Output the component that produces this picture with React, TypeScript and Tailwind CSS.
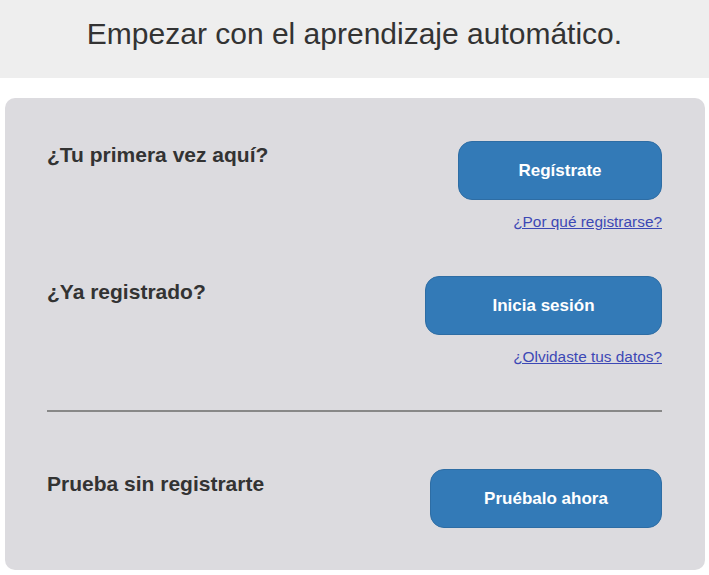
import React from "react";

const font = { fontFamily: '"Liberation Sans", Arial, sans-serif' };

function Btn({ w, children }: { w: string; children: React.ReactNode }) {
  return (
    <button
      className={`${w} h-[59px] rounded-[14px] border border-[#2e6da4] bg-[#337ab7] text-[17px] font-bold text-white`}
    >
      {children}
    </button>
  );
}

export default function App() {
  return (
    <div className="w-[709px] h-[575px] bg-white text-[#333333]" style={font}>
      <div className="h-[78px] bg-[#eeeeee] flex items-center justify-center">
        <h1 className="text-[30px] leading-[34px] text-[#333333] -mt-[11px]">
          Empezar con el aprendizaje automático.
        </h1>
      </div>
      <div className="mt-[20px] ml-[5px] mr-[4px] h-[472px] rounded-[10px] bg-[#dcdbdf] pl-[42px] pr-[43px] pt-[43px]">
        <div className="flex justify-between items-start">
          <h3 className="mt-[2px] text-[21px] font-bold leading-[24px]">¿Tu primera vez aquí?</h3>
          <div className="flex flex-col items-end">
            <Btn w="w-[204px]">Regístrate</Btn>
            <a href="#" className="mt-[13px] text-[15.4px] leading-[17px] text-[#3c48b5] underline">
              ¿Por qué registrarse?
            </a>
          </div>
        </div>
        <div className="mt-[46px] flex justify-between items-start">
          <h3 className="mt-[4px] text-[21px] font-bold leading-[24px]">¿Ya registrado?</h3>
          <div className="flex flex-col items-end">
            <Btn w="w-[237px]">Inicia sesión</Btn>
            <a href="#" className="mt-[13px] text-[15.4px] leading-[17px] text-[#3c48b5] underline">
              ¿Olvidaste tus datos?
            </a>
          </div>
        </div>
        <div className="mt-[45px] h-[2px] bg-[#888888]" />
        <div className="mt-[57px] flex justify-between items-start">
          <h3 className="mt-[3px] text-[21px] font-bold leading-[24px]">Prueba sin registrarte</h3>
          <Btn w="w-[232px]">Pruébalo ahora</Btn>
        </div>
      </div>
    </div>
  );
}
